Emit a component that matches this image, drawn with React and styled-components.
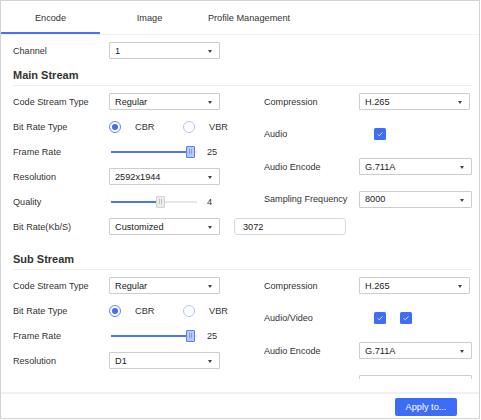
import React from "react";
import styled, { createGlobalStyle } from "styled-components";

const Global = createGlobalStyle`
  html, body { margin: 0; padding: 0; background: #fff; }
  body { font-family: "Liberation Sans", Arial, sans-serif; font-size: 9px; color: #333; }
  * { box-sizing: border-box; }
`;

const BLUE = "#3f6df6";

const Frame = styled.div`
  width: 480px;
  height: 419px;
  border: 1px solid #d3d3d3;
  display: flex;
  flex-direction: column;
  background: #fff;
`;

const TabBar = styled.div`
  display: flex;
  height: 34px;
  border-bottom: 1px solid #f1f1f1;
  flex-shrink: 0;
`;

const Tab = styled.div`
  width: ${(p) => p.$w || 99}px;
  height: 33px;
  display: flex;
  align-items: center;
  justify-content: center;
  font-size: 9.2px;
  color: #333;
  border-bottom: 2px solid ${(p) => (p.$active ? "#4f6ff3" : "transparent")};
  padding-top: 2px;
`;

const Scroll = styled.div`
  height: 344px;
  overflow: hidden;
  padding: 7px 7px 0 12px;
  flex-shrink: 0;
`;

const Row = styled.div`
  display: flex;
  align-items: center;
  height: ${(p) => p.$h || 25}px;
`;

const Label = styled.div`
  width: ${(p) => p.$w || 96}px;
  flex-shrink: 0;
  font-size: 9.1px;
  color: #333;
  white-space: nowrap;
`;

const SelectBox = styled.div`
  position: relative;
  flex-shrink: 0;
  width: ${(p) => p.$w || 111}px;
  height: 17px;
  border: 1px solid #cdcdcd;
  border-radius: 1px;
  display: flex;
  align-items: center;
  padding-left: 5px;
  font-size: 9.2px;
  color: #222;
  background: #fff;
`;

const Arrow = styled.span`
  position: absolute;
  right: 7px;
  top: 7px;
  width: 0;
  height: 0;
  border-left: 2.5px solid transparent;
  border-right: 2.5px solid transparent;
  border-top: 3px solid #444;
`;

const TextInput = styled.div`
  flex-shrink: 0;
  width: 112px;
  height: 17px;
  margin-left: 14px;
  border: 1px solid #d9d9d9;
  border-radius: 3px;
  display: flex;
  align-items: center;
  padding-left: 8px;
  font-size: 9.2px;
  color: #222;
`;

const Title = styled.div`
  font-weight: bold;
  font-size: 11px;
  line-height: 13px;
  color: #333;
  padding-bottom: 3px;
  border-bottom: 1px solid #eeeeee;
  margin-top: ${(p) => p.$mt || 0}px;
`;

const Columns = styled.div`
  display: grid;
  grid-template-columns: 251px 1fr;
  padding-top: 3px;
`;

const Col = styled.div`
  display: flex;
  flex-direction: column;
  gap: ${(p) => p.$gap || 0}px;
  min-width: 0;
`;

const RadioGroup = styled.div`
  display: flex;
  align-items: center;
`;

const RadioOption = styled.div`
  width: 74px;
  display: flex;
  align-items: center;
  gap: 14px;
  font-size: 9.2px;
  color: #333;
`;

const RadioCircle = styled.span`
  width: 12px;
  height: 12px;
  border-radius: 50%;
  border: 1px solid ${(p) => (p.$on ? "#5f83f6" : "#b3c3ef")};
  display: flex;
  align-items: center;
  justify-content: center;
  flex-shrink: 0;
  &::after {
    content: "";
    width: 6px;
    height: 6px;
    border-radius: 50%;
    background: ${(p) => (p.$on ? BLUE : "transparent")};
  }
`;

const SliderWrap = styled.div`
  display: flex;
  align-items: center;
  margin-left: 2px;
`;

const Track = styled.div`
  position: relative;
  width: 86px;
  height: 2px;
  background: #e6e6e6;
`;

const Fill = styled.div`
  height: 2px;
  background: #4d74f5;
`;

const Thumb = styled.div`
  position: absolute;
  top: -5px;
  width: 9px;
  height: 12px;
  border-radius: 1px;
  border: 1px solid ${(p) => (p.$active ? "#5b7ff5" : "#d4d4d4")};
  background: ${(p) => (p.$active ? "#b7c8fb" : "#ececec")};
  display: flex;
  align-items: center;
  justify-content: center;
  gap: 1px;
  &::before,
  &::after {
    content: "";
    width: 1px;
    height: 5px;
    background: ${(p) => (p.$active ? "#7f9cf7" : "#c4c4c4")};
  }
`;

const SliderValue = styled.span`
  margin-left: 10px;
  font-size: 9.2px;
  color: #333;
`;

const CheckBox = styled.span`
  width: 12px;
  height: 12px;
  border-radius: 1.5px;
  background: ${BLUE};
  display: inline-flex;
  align-items: center;
  justify-content: center;
  flex-shrink: 0;
  margin-left: ${(p) => p.$ml ?? 15}px;
`;

const Footer = styled.div`
  margin-top: 13px;
  border-top: 2px solid #eff0f5;
  display: flex;
  justify-content: flex-end;
  padding: 4px 22px 0 0;
  flex-shrink: 0;
`;

const Button = styled.div`
  width: 62px;
  height: 18px;
  border-radius: 2px;
  background: #3d6cf7;
  color: #fff;
  font-size: 9.2px;
  display: flex;
  align-items: center;
  justify-content: center;
`;

const Select = ({ value, w }) => (
  <SelectBox $w={w}>
    {value}
    <Arrow />
  </SelectBox>
);

const Radio = ({ options, selected }) => (
  <RadioGroup>
    {options.map((o) => (
      <RadioOption key={o}>
        <RadioCircle $on={o === selected} />
        {o}
      </RadioOption>
    ))}
  </RadioGroup>
);

const Slider = ({ value, min, max, active }) => {
  const pct = (value - min) / (max - min);
  const left = pct * 75;
  return (
    <SliderWrap>
      <Track>
        <Fill style={{ width: left + 4.5 }} />
        <Thumb $active={active} style={{ left }} />
      </Track>
      <SliderValue>{value}</SliderValue>
    </SliderWrap>
  );
};

const Check = ({ ml }) => (
  <CheckBox $ml={ml}>
    <svg width="8" height="8" viewBox="0 0 8 8">
      <polyline points="1.5,4.2 3.3,5.8 6.5,2.4" fill="none" stroke="rgba(255,255,255,0.75)" strokeWidth="1" />
    </svg>
  </CheckBox>
);

const RightLabel = styled(Label)`
  width: 95px;
`;

export default function App() {
  return (
    <>
      <Global />
      <Frame>
        <TabBar>
          <Tab $active>Encode</Tab>
          <Tab>Image</Tab>
          <Tab $w={100}>Profile Management</Tab>
        </TabBar>
        <Scroll>
          <Row $h={17}>
            <Label>Channel</Label>
            <Select value="1" />
          </Row>
          <Title $mt={10}>Main Stream</Title>
          <Columns>
            <Col>
              <Row>
                <Label>Code Stream Type</Label>
                <Select value="Regular" />
              </Row>
              <Row>
                <Label>Bit Rate Type</Label>
                <Radio options={["CBR", "VBR"]} selected="CBR" />
              </Row>
              <Row>
                <Label>Frame Rate</Label>
                <Slider value={25} min={1} max={25} active />
              </Row>
              <Row>
                <Label>Resolution</Label>
                <Select value="2592x1944" />
              </Row>
              <Row>
                <Label>Quality</Label>
                <Slider value={4} min={1} max={6} />
              </Row>
              <Row>
                <Label>Bit Rate(Kb/S)</Label>
                <Select value="Customized" />
                <TextInput>3072</TextInput>
              </Row>
            </Col>
            <Col $gap={7.5}>
              <Row>
                <RightLabel>Compression</RightLabel>
                <Select value="H.265" />
              </Row>
              <Row>
                <RightLabel>Audio</RightLabel>
                <Check />
              </Row>
              <Row>
                <RightLabel>Audio Encode</RightLabel>
                <Select value="G.711A" w={113} />
              </Row>
              <Row>
                <RightLabel>Sampling Frequency</RightLabel>
                <Select value="8000" w={113} />
              </Row>
            </Col>
          </Columns>
          <Title $mt={14}>Sub Stream</Title>
          <Columns>
            <Col>
              <Row>
                <Label>Code Stream Type</Label>
                <Select value="Regular" />
              </Row>
              <Row>
                <Label>Bit Rate Type</Label>
                <Radio options={["CBR", "VBR"]} selected="CBR" />
              </Row>
              <Row>
                <Label>Frame Rate</Label>
                <Slider value={25} min={1} max={25} active />
              </Row>
              <Row>
                <Label>Resolution</Label>
                <Select value="D1" />
              </Row>
              <Row>
                <Label>Quality</Label>
                <Slider value={4} min={1} max={6} />
              </Row>
            </Col>
            <Col $gap={7.5}>
              <Row>
                <RightLabel>Compression</RightLabel>
                <Select value="H.265" />
              </Row>
              <Row>
                <RightLabel>Audio/Video</RightLabel>
                <Check />
                <Check ml={14} />
              </Row>
              <Row>
                <RightLabel>Audio Encode</RightLabel>
                <Select value="G.711A" w={113} />
              </Row>
              <Row>
                <RightLabel>Sampling Frequency</RightLabel>
                <Select value="8000" w={113} />
              </Row>
            </Col>
          </Columns>
        </Scroll>
        <Footer>
          <Button>Apply to...</Button>
        </Footer>
      </Frame>
    </>
  );
}
